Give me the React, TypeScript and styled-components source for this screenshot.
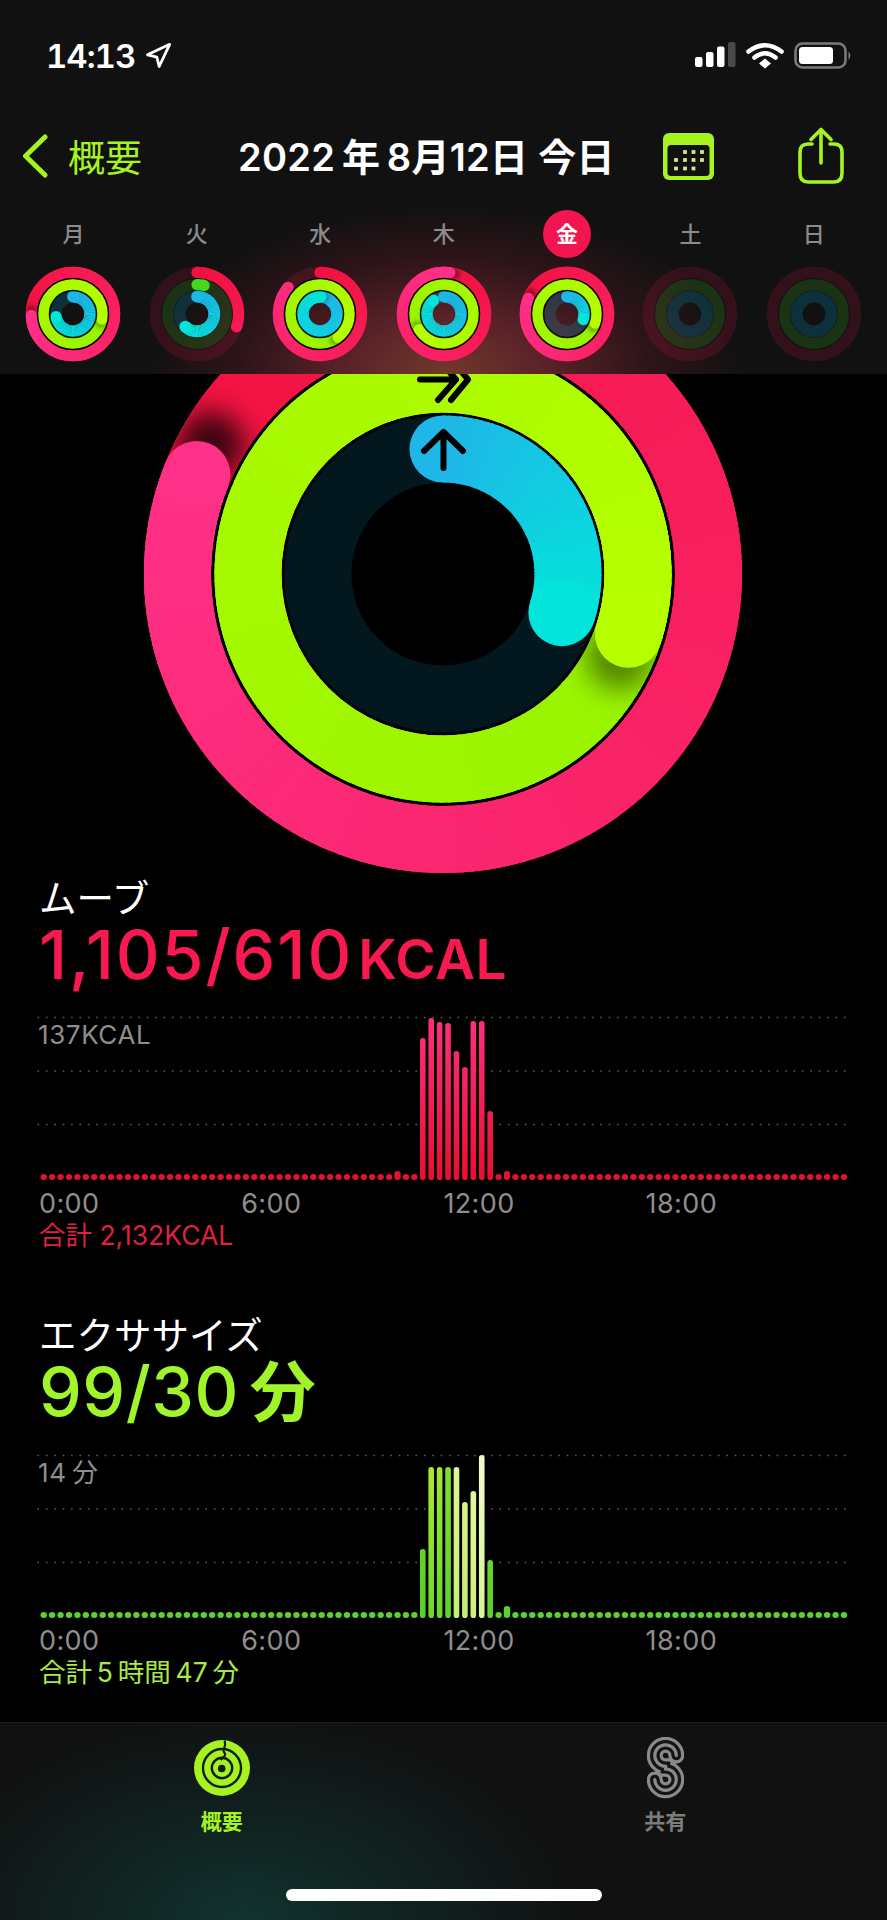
import React from "react";
import styled, { createGlobalStyle } from "styled-components";
import { Navigation } from "lucide-react";

const SANS = `Inter, "Noto Sans CJK JP", sans-serif`;
const LIME = "#a6f31f";

const Global = createGlobalStyle`
  html, body { margin: 0; padding: 0; background: #000; }
  * { box-sizing: border-box; }
`;

const Page = styled.div`
  width: 887px;
  height: 1920px;
  background: #000;
  display: flex;
  flex-direction: column;
  overflow: hidden;
  font-family: ${SANS};
  color: #fff;
`;

const Header = styled.header`
  height: 374px;
  flex: none;
  background: radial-gradient(ellipse 300px 170px at 445px 374px, #70392a 0%, #5c2329 32%, #2e1419 68%, #111 100%), #111;
`;

const StatusBar = styled.div`
  height: 110px;
  display: flex;
  align-items: center;
  justify-content: space-between;
  padding: 2px 34px 0 46px;
`;

const Time = styled.div`
  display: flex;
  align-items: center;
  gap: 9px;
  font-size: 33px;
  font-weight: 600;
  font-variant-numeric: tabular-nums;
  letter-spacing: -1px;
`;

const NavRow = styled.nav`
  height: 94px;
  display: grid;
  grid-template-columns: 216px 425px 134px 1fr;
  align-items: center;
  padding-left: 22px;
`;

const Back = styled.div`
  display: flex;
  align-items: center;
  gap: 20px;
  color: ${LIME};
  font-size: 37px;
  padding-bottom: 3px;
`;

const Title = styled.h1`
  margin: 0;
  padding-bottom: 6px;
  font-size: 38px;
  font-weight: 600;
  letter-spacing: 0.3px;
  white-space: nowrap;
`;

const DayGrid = styled.div`
  display: grid;
  grid-template-columns: repeat(7, 123.4px);
  padding: 6px 0 0 11.8px;
  justify-items: center;
`;

const DayLabel = styled.div<{ $active?: boolean }>`
  width: 48px;
  height: 48px;
  padding-bottom: 4px;
  border-radius: 50%;
  display: flex;
  align-items: center;
  justify-content: center;
  font-size: 22px;
  font-weight: ${(p) => (p.$active ? 700 : 500)};
  color: ${(p) => (p.$active ? "#fff" : "#8b8b8b")};
  background: ${(p) => (p.$active ? "#f1164f" : "transparent")};
`;

const DayRing = styled.svg`
  display: block;
  margin-top: 8px;
`;

const RingStage = styled.svg`
  display: block;
  flex: none;
`;

const Section = styled.section`
  padding: 0 39px;
  & + & {
    margin-top: 67px;
  }
`;

const SectionName = styled.div`
  font-size: 37.5px;
  font-weight: 400;
  line-height: 38px;
`;

const Value = styled.div<{ $color: string; $track: number }>`
  color: ${(p) => p.$color};
  font-size: 68px;
  font-weight: 500;
  line-height: 72px;
  letter-spacing: ${(p) => p.$track}px;
  white-space: nowrap;
`;

const Unit = styled.span<{ $size: number; $gap: number }>`
  font-size: ${(p) => p.$size}px;
  font-weight: ${(p) => (p.$size > 60 ? 700 : 600)};
  margin-left: ${(p) => p.$gap}px;
  letter-spacing: 0.5px;
`;

const ChartBox = styled.div<{ $top: number }>`
  position: relative;
  margin: ${(p) => p.$top}px -39px 0;
  height: 172px;
`;

const ChartMax = styled.div`
  position: absolute;
  left: 38px;
  top: 9px;
  font-size: 26px;
  letter-spacing: 0.6px;
  color: #8e8e8e;
  line-height: 28px;
`;

const Axis = styled.div`
  display: grid;
  grid-template-columns: repeat(4, 202.2px);
  margin-top: 2.5px;
  font-size: 27px;
  letter-spacing: 0.4px;
  line-height: 33px;
  color: #8e8e8e;
`;

const Total = styled.div<{ $color: string }>`
  color: ${(p) => p.$color};
  font-size: 26.5px;
  line-height: 30px;
  white-space: nowrap;
`;

const TabBar = styled.footer`
  margin-top: auto;
  height: 198px;
  flex: none;
  border-top: 1px solid #1c1c1c;
  background: radial-gradient(ellipse 340px 210px at 245px 100%, #12332f 0%, #10211f 50%, #111 100%), #111;
  display: grid;
  grid-template-columns: 1fr 1fr;
  align-items: start;
  position: relative;
`;

const Tab = styled.div<{ $active?: boolean }>`
  display: flex;
  flex-direction: column;
  align-items: center;
  padding-top: 14px;
  font-size: 21px;
  font-weight: 700;
  line-height: 28px;
  color: ${(p) => (p.$active ? LIME : "#7d7d7d")};
`;

const TabIcon = styled.div`
  height: 62px;
  margin-bottom: 9px;
  display: flex;
  align-items: center;
`;

const HomeBar = styled.div`
  position: absolute;
  left: 286px;
  bottom: 19px;
  width: 316px;
  height: 12px;
  border-radius: 6px;
  background: #fff;
`;

/* ---- rings ---- */

const MOVE = { from: "#f2123f", to: "#ff3088", track: "rgba(250,17,79,.15)" };
const EXERCISE = { from: "#97f300", to: "#b6ff00", track: "rgba(80,220,40,.17)" };
const STAND = { from: "#1fb6e8", to: "#03e5da", track: "rgba(0,180,225,.2)" };

function mix(a: string, b: string, t: number) {
  const n = (s: string, i: number) => parseInt(s.slice(i, i + 2), 16);
  const c = [1, 3, 5].map((i) => Math.round(n(a, i) + (n(b, i) - n(a, i)) * Math.min(1, t)));
  return `rgb(${c[0]},${c[1]},${c[2]})`;
}

function polar(r: number, deg: number) {
  const rad = (deg * Math.PI) / 180;
  return [r * Math.sin(rad), -r * Math.cos(rad)];
}

type Band = { from: string; to: string; track: string };

type RingProps = {
  id: string;
  r: number;
  w: number;
  deg: number;
  band: Band;
  stretch?: boolean;
  track?: string;
  shade?: number;
};

function Ring({ id, r, w, deg, band, stretch, track, shade = 0.4 }: RingProps) {
  const step = r > 100 ? 2 : 5;
  const start = Math.max(0, deg - 360);
  const color = (a: number) => mix(band.from, band.to, stretch ? (a - start) / (deg - start || 1) : (a - start) / 360);
  const arcs: { a: number; d: string; c: string }[] = [];
  for (let a = start; a < deg; a += step) {
    const end = Math.min(deg, a + step + 0.7);
    const [x0, y0] = polar(r, a);
    const [x1, y1] = polar(r, end);
    arcs.push({ a, d: `M${x0} ${y0}A${r} ${r} 0 0 1 ${x1} ${y1}`, c: color(a) });
  }
  const seg = (list: typeof arcs) =>
    list.map((s) => <path key={s.a} d={s.d} stroke={s.c} strokeWidth={w} fill="none" />);
  const [ex, ey] = polar(r, deg);
  const [sx, sy] = polar(r, deg + 7);
  const [hx, hy] = polar(r, 0);
  const ro = r + w / 2;
  const ri = r - w / 2;
  const overlap = deg >= 360;
  return (
    <g>
      <circle r={r} fill="none" stroke={track || band.track} strokeWidth={w} />
      {deg > 0 && overlap && <circle r={r} fill="none" stroke={color(start)} strokeWidth={w} />}
      {deg > 0 && !overlap && <circle cx={hx} cy={hy} r={w / 2} fill={color(0)} />}
      {seg(arcs)}
      {overlap && (
        <>
          <clipPath id={`${id}-clip`}>
            <path
              clipRule="evenodd"
              d={`M${-ro} 0A${ro} ${ro} 0 1 0 ${ro} 0A${ro} ${ro} 0 1 0 ${-ro} 0ZM${-ri} 0A${ri} ${ri} 0 1 0 ${ri} 0A${ri} ${ri} 0 1 0 ${-ri} 0Z`}
            />
          </clipPath>
          <filter id={`${id}-blur`} x="-100%" y="-100%" width="300%" height="300%">
            <feGaussianBlur stdDeviation={w * 0.2} />
          </filter>
          <g clipPath={`url(#${id}-clip)`}>
            <circle cx={sx} cy={sy} r={w * 0.5} fill="#000" opacity={shade} filter={`url(#${id}-blur)`} />
          </g>
          {seg(arcs.filter((s) => s.a >= deg - 50))}
        </>
      )}
      {deg > 0 && <circle cx={ex} cy={ey} r={w / 2} fill={color(deg)} />}
    </g>
  );
}

const DAYS = [
  { label: "月", move: 628, exercise: 460, stand: 260 },
  { label: "火", move: 108, exercise: 14, stand: 223 },
  { label: "水", move: 310, exercise: 502, stand: 362 },
  { label: "木", move: 368, exercise: 598, stand: 322 },
  { label: "金", move: 652, exercise: 468, stand: 108, active: true },
  { label: "土", move: 0, exercise: 0, stand: 0 },
  { label: "日", move: 0, exercise: 0, stand: 0 },
];

const EARLY_GREEN = { from: "#45d81c", to: "#45d81c", track: EXERCISE.track };

/* ---- charts ---- */

const BAR_BOTTOM = 168;
const barX = (i: number) => 43.7 + i * 8.424;

type Bar = { h: number; top: string; bottom: string };

function Chart(props: { id: string; bars: Record<number, Bar>; dot: string; bump: Record<number, number>; shared?: boolean }) {
  const { id, bars, dot, bump, shared } = props;
  const all = Array.from({ length: 96 }, (_, i) => i);
  return (
    <svg width={887} height={172} style={{ display: "block" }}>
      <defs>
        {shared && (
          <linearGradient id={`${id}-all`} gradientUnits="userSpaceOnUse" x1="0" y1="6" x2="0" y2={BAR_BOTTOM}>
            <stop offset="0" stopColor="#fb3080" />
            <stop offset="1" stopColor="#e8102e" />
          </linearGradient>
        )}
        {!shared &&
          Object.entries(bars).map(([i, b]) => (
            <linearGradient key={i} id={`${id}-${i}`} x1="0" y1="0" x2="0" y2="1">
              <stop offset="0" stopColor={b.top} />
              <stop offset="1" stopColor={b.bottom} />
            </linearGradient>
          ))}
      </defs>
      {[5.5, 59, 112.5].map((y) => (
        <line key={y} x1={37.5} x2={847} y1={y} y2={y} stroke="#5c5c5c" strokeWidth={1.4} strokeDasharray="1.6 6.8" />
      ))}
      {all.map((i) => {
        const b = bars[i];
        const h = b ? b.h : bump[i] || 6;
        const w = b ? 5.6 : 6.4;
        const fill = b ? (shared ? `url(#${id}-all)` : `url(#${id}-${i})`) : dot;
        return <rect key={i} x={barX(i) - w / 2} y={BAR_BOTTOM - h} width={w} height={h} rx={w / 2} fill={fill} />;
      })}
    </svg>
  );
}

const moveBar = (h: number): Bar => ({ h, top: "", bottom: "" });
const MOVE_BARS: Record<number, Bar> = {
  45: moveBar(142),
  46: moveBar(162),
  47: moveBar(158),
  48: moveBar(157),
  49: moveBar(129),
  50: moveBar(113),
  51: moveBar(159),
  52: moveBar(159),
  53: moveBar(69),
};

const EXERCISE_BARS: Record<number, Bar> = {
  45: { h: 69, top: "#62d32c", bottom: "#58d02b" },
  46: { h: 151, top: "#abe92e", bottom: "#6cd82b" },
  47: { h: 151, top: "#a4e62c", bottom: "#68d72b" },
  48: { h: 151, top: "#84dd2c", bottom: "#5ad62b" },
  49: { h: 151, top: "#dff691", bottom: "#c6ee78" },
  50: { h: 116, top: "#d6f38c", bottom: "#c4ec74" },
  51: { h: 127, top: "#e1f7a2", bottom: "#cff080" },
  52: { h: 163, top: "#f1fbcb", bottom: "#d8f598" },
  53: { h: 58, top: "#68d52c", bottom: "#5cd02b" },
};

/* ---- icons ---- */

function StatusIcons() {
  return (
    <svg width={158} height={28} viewBox="0 0 158 28">
      <rect x="0" y="15" width="7.5" height="10" rx="2" fill="#fff" />
      <rect x="11" y="10" width="7.5" height="15" rx="2" fill="#fff" />
      <rect x="22" y="4.5" width="7.5" height="20.5" rx="2" fill="#fff" />
      <rect x="33" y="0" width="7.5" height="25" rx="2" fill="#4a4a4a" />
      <path d="M53.5 9.5Q70 -3 86.5 9.5" fill="none" stroke="#fff" strokeWidth="4.6" strokeLinecap="round" />
      <path d="M59.5 15.5Q70 7 80.5 15.5" fill="none" stroke="#fff" strokeWidth="4.6" strokeLinecap="round" />
      <path d="M64 21.5L70 16.5L76 21.5L70 26.5Z" fill="#fff" />
      <rect x="100.5" y="1.5" width="50" height="24" rx="7" fill="none" stroke="#7a7a7a" strokeWidth="2.6" />
      <rect x="104" y="5" width="34" height="17" rx="3.5" fill="#fff" />
      <path d="M153.5 9.5Q157 13.5 153.5 18Z" fill="#7a7a7a" />
    </svg>
  );
}

function Chevron() {
  return (
    <svg width={26} height={44} viewBox="0 0 26 44">
      <path d="M23 3L3.5 22L23 41" fill="none" stroke={LIME} strokeWidth="5" strokeLinecap="round" strokeLinejoin="round" />
    </svg>
  );
}

function CalendarIcon() {
  const dots = [
    [35, 32], [43.5, 32], [52, 32],
    [26, 40], [35, 40], [43.5, 40], [52, 40],
    [26, 48.5], [35, 48.5], [43.5, 48.5],
  ];
  return (
    <svg width={51} height={48} viewBox="13 13 51 48">
      <rect x="13" y="13" width="51" height="47" rx="6" fill={LIME} />
      <rect x="17.5" y="25" width="42" height="31" rx="3.5" fill="#111" />
      {dots.map(([x, y]) => (
        <rect key={`${x}-${y}`} x={x - 1.9} y={y - 1.9} width="3.8" height="3.8" fill="#cfe98a" />
      ))}
    </svg>
  );
}

function ShareIcon() {
  return (
    <svg width={48} height={58} viewBox="0 0 48 58" style={{ marginTop: -2 }}>
      <path d="M15 17H11Q3 17 3 25V46Q3 55 11 55H37Q45 55 45 46V25Q45 17 37 17H33" fill="none" stroke={LIME} strokeWidth="3.6" strokeLinecap="round" />
      <path d="M24 36V3M14 12.5L24 2.5L34 12.5" fill="none" stroke={LIME} strokeWidth="3.6" strokeLinecap="round" strokeLinejoin="round" />
    </svg>
  );
}

function SummaryIcon() {
  return (
    <svg width={60} height={60} viewBox="7.3 7 60 60">
      <circle cx="37.3" cy="37" r="28" fill={LIME} />
      <circle cx="37.3" cy="37" r="19" fill="none" stroke="#0e1c1a" strokeWidth="2.4" />
      <circle cx="37.3" cy="37" r="10.2" fill="none" stroke="#0e1c1a" strokeWidth="2.4" />
      <circle cx="37" cy="37.5" r="3.8" fill="#0e1c1a" />
      <path d="M40 9.5Q41 14 39.5 17T40 22T36 29" fill="none" stroke="#0e1c1a" strokeWidth="2.2" />
    </svg>
  );
}

function SharingIcon() {
  const d = "M45.3 25.5A10.75 10.75 0 1 0 34.5 36.3L34.5 38.8A10.75 10.75 0 1 1 23.8 49.5";
  return (
    <svg width={37} height={62} viewBox="16 7 37 62">
      <path d={d} fill="none" stroke="#8a8a8a" strokeWidth="16" strokeLinecap="round" />
      <path d={d} fill="none" stroke="#141414" strokeWidth="9.6" strokeLinecap="round" />
      <path d={d} fill="none" stroke="#8a8a8a" strokeWidth="3.2" strokeLinecap="round" />
    </svg>
  );
}

export default function App() {
  return (
    <Page>
      <Global />
      <Header>
        <StatusBar>
          <Time>
            14:13
            <Navigation size={28} strokeWidth={2.4} color="#fff" />
          </Time>
          <StatusIcons />
        </StatusBar>
        <NavRow>
          <Back>
            <Chevron />
            概要
          </Back>
          <Title>2022{"\u2009"}年{"\u2009"}8月12日 今日</Title>
          <CalendarIcon />
          <ShareIcon />
        </NavRow>
        <DayGrid>
          {DAYS.map((d) => (
            <DayLabel key={d.label} $active={d.active}>
              {d.label}
            </DayLabel>
          ))}
          {DAYS.map((d, i) => (
            <DayRing key={d.label} width={96} height={96} viewBox="-48 -48 96 96">
              <Ring id={`d${i}m`} r={41.6} w={11.2} deg={d.move} band={MOVE} shade={0.35} />
              <Ring
                id={`d${i}e`}
                r={29.4}
                w={11.2}
                deg={d.exercise}
                band={d.exercise > 0 && d.exercise < 60 ? EARLY_GREEN : EXERCISE}
                shade={0.3}
              />
              <Ring id={`d${i}s`} r={17.3} w={11.8} deg={d.stand} band={STAND} stretch shade={0.3} />
              {d.move > 300 && (
                <>
                  <circle r={35.5} fill="none" stroke="#000" strokeOpacity={0.85} strokeWidth={1.6} />
                  <circle r={23.5} fill="none" stroke="#000" strokeOpacity={0.85} strokeWidth={1.6} />
                </>
              )}
            </DayRing>
          ))}
        </DayGrid>
      </Header>

      <RingStage width={887} height={506} viewBox="0 374 887 506">
        <g transform="translate(443 574)">
          <Ring id="mainm" r={265.5} w={67} deg={652} band={MOVE} shade={0.75} />
          <Ring id="maine" r={195} w={67} deg={468} band={EXERCISE} shade={0.45} />
          <Ring id="mains" r={125} w={67} deg={108} band={STAND} track="#03171e" stretch />
        </g>
        <g fill="none" stroke="#000" strokeWidth={6} strokeLinecap="round" strokeLinejoin="round">
          <path d="M420 379.5H456M438 400L456 379.5L438 359M451 400L468 379.5L451 359" />
          <path d="M443.5 468V433M424 451L443.5 432L463 451" />
        </g>
      </RingStage>

      <Section>
        <SectionName>ムーブ</SectionName>
        <Value $color="#f7194f" $track={1.9}>
          1,105/610
          <Unit $size={55} $gap={5}>KCAL</Unit>
        </Value>
        <ChartBox $top={17}>
          <Chart id="mv" bars={MOVE_BARS} shared dot="#e0142f" bump={{ 42: 9, 55: 9 }} />
          <ChartMax>137KCAL</ChartMax>
        </ChartBox>
        <Axis>
          <span>0:00</span>
          <span>6:00</span>
          <span>12:00</span>
          <span>18:00</span>
        </Axis>
        <Total $color="#df2140">合計 2,132KCAL</Total>
      </Section>

      <Section>
        <SectionName>エクササイズ</SectionName>
        <Value $color="#a2f42a" $track={0.5}>
          99/30
          <Unit $size={66} $gap={11}>分</Unit>
        </Value>
        <ChartBox $top={22}>
          <Chart id="ex" bars={EXERCISE_BARS} dot="#5ed12e" bump={{ 55: 12 }} />
          <ChartMax>14{"\u2009"}分</ChartMax>
        </ChartBox>
        <Axis>
          <span>0:00</span>
          <span>6:00</span>
          <span>12:00</span>
          <span>18:00</span>
        </Axis>
        <Total $color="#a9e84b">合計{"\u2009"}5{"\u2009"}時間{"\u2009"}47{"\u2009"}分</Total>
      </Section>

      <TabBar>
        <Tab $active>
          <TabIcon>
            <SummaryIcon />
          </TabIcon>
          概要
        </Tab>
        <Tab>
          <TabIcon>
            <SharingIcon />
          </TabIcon>
          共有
        </Tab>
        <HomeBar />
      </TabBar>
    </Page>
  );
}
